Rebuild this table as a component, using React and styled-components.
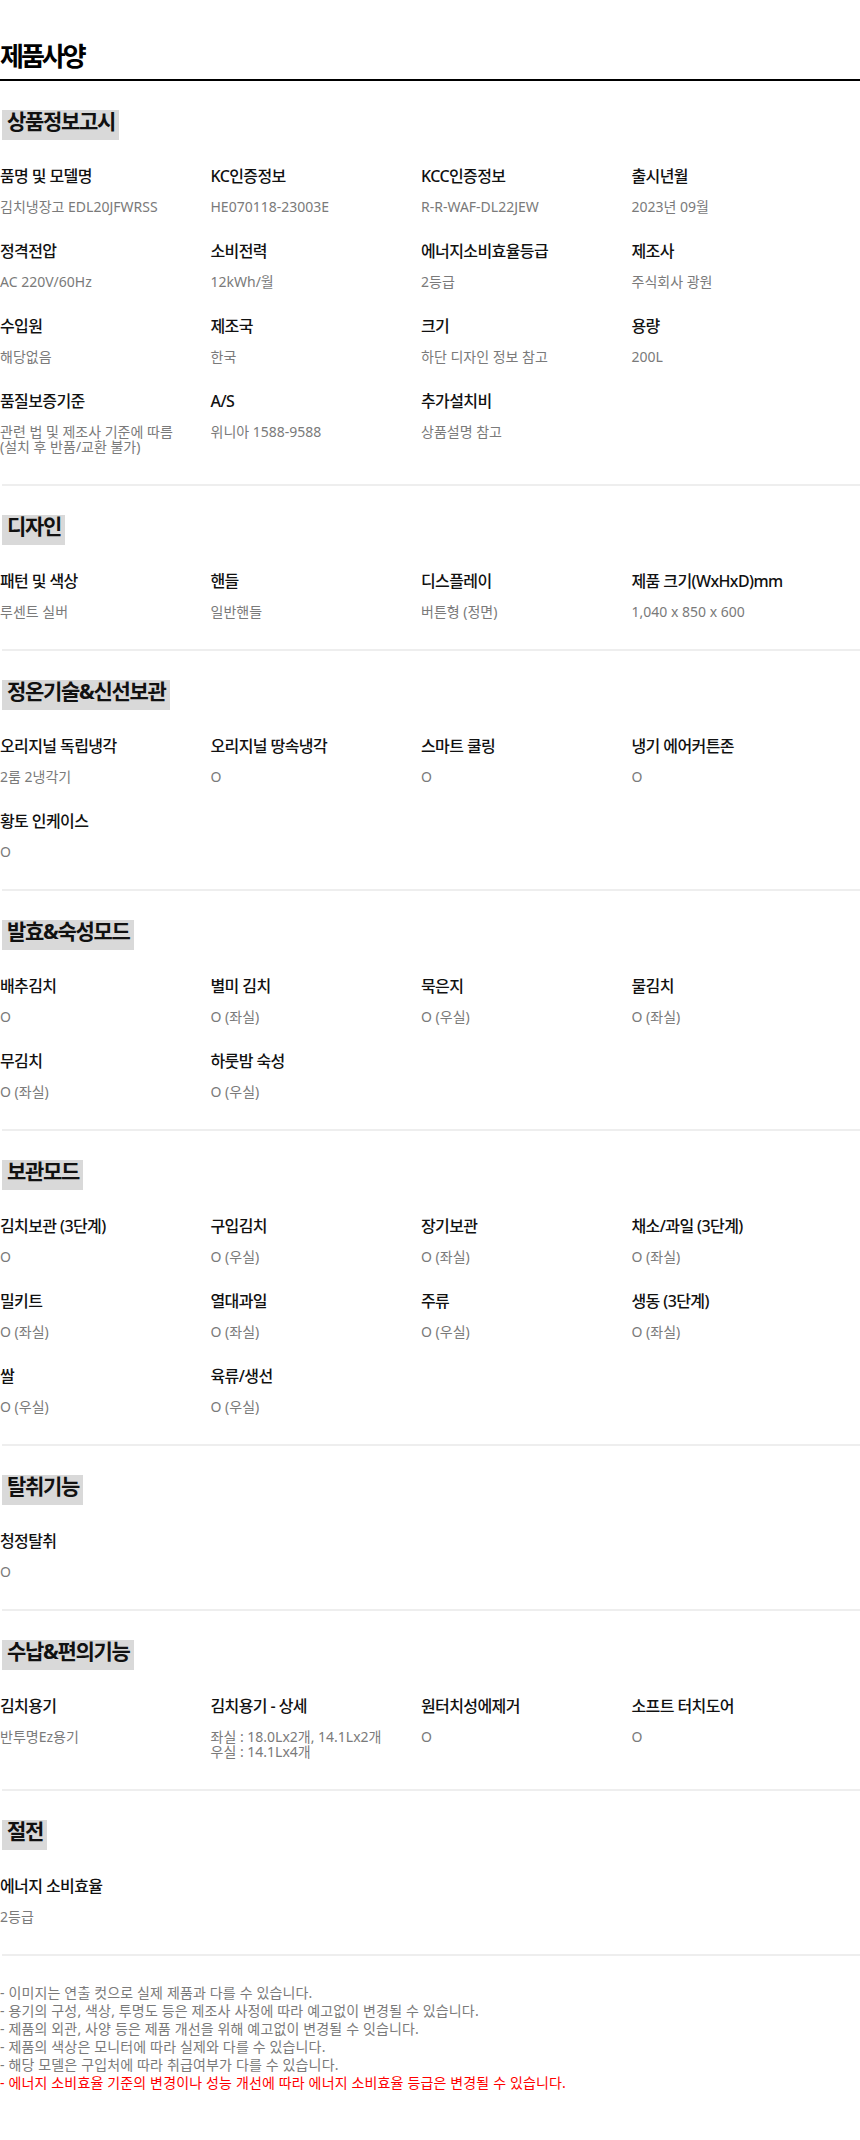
import React from 'react';
import styled, { createGlobalStyle } from 'styled-components';

const GlobalStyle = createGlobalStyle`
  body {
    margin: 0;
    background: #fff;
    font-family: "Noto Sans", "Noto Sans CJK KR", sans-serif;
  }
`;

const Page = styled.div`
  width: 860px;
`;

const Title = styled.h2`
  margin: 41px 0 0;
  padding: 0 0 8px;
  font-size: 26px;
  line-height: 30px;
  font-weight: 700;
  letter-spacing: -3px;
  color: #000;
  border-bottom: 2px solid #000;
`;

const Section = styled.section`
  margin-left: 2px;
  padding: 29px 0 30px;
  border-bottom: 2px solid #eee;
`;

const SectionName = styled.h3`
  display: inline-block;
  margin: 0;
  padding: 0 4px 7px 5px;
  height: 23px;
  line-height: 23px;
  background: #d9d9d9;
  font-size: 21px;
  font-weight: 700;
  letter-spacing: -1.3px;
  color: #111;
`;

const SpecGrid = styled.dl`
  display: grid;
  grid-template-columns: repeat(4, 210.5px);
  row-gap: 26px;
  margin: 25px 0 0 -2px;
`;

const Item = styled.div``;

const Label = styled.dt`
  font-size: 16px;
  line-height: 22px;
  letter-spacing: -0.6px;
  color: #111;
  font-weight: 500;
`;

const Value = styled.dd`
  margin: 12px 0 0;
  font-size: 14px;
  line-height: 15px;
  letter-spacing: 0;
  color: #7a7a7a;
  white-space: pre-line;
`;

const Notes = styled.div`
  padding-top: 28px;
`;

const Note = styled.p`
  margin: 0;
  font-size: 14px;
  line-height: 18px;
  letter-spacing: 0.15px;
  color: ${(p) => (p.$warn ? '#ff0000' : '#7a7a7a')};
`;

const sections = [
  {
    name: '상품정보고시',
    items: [
      ['품명 및 모델명', '김치냉장고 EDL20JFWRSS'],
      ['KC인증정보', 'HE070118-23003E'],
      ['KCC인증정보', 'R-R-WAF-DL22JEW'],
      ['출시년월', '2023년 09월'],
      ['정격전압', 'AC 220V/60Hz'],
      ['소비전력', '12kWh/월'],
      ['에너지소비효율등급', '2등급'],
      ['제조사', '주식회사 광원'],
      ['수입원', '해당없음'],
      ['제조국', '한국'],
      ['크기', '하단 디자인 정보 참고'],
      ['용량', '200L'],
      ['품질보증기준', '관련 법 및 제조사 기준에 따름\n(설치 후 반품/교환 불가)'],
      ['A/S', '위니아 1588-9588'],
      ['추가설치비', '상품설명 참고'],
    ],
  },
  {
    name: '디자인',
    items: [
      ['패턴 및 색상', '루센트 실버'],
      ['핸들', '일반핸들'],
      ['디스플레이', '버튼형 (정면)'],
      ['제품 크기(WxHxD)mm', '1,040 x 850 x 600'],
    ],
  },
  {
    name: '정온기술&신선보관',
    items: [
      ['오리지널 독립냉각', '2룸 2냉각기'],
      ['오리지널 땅속냉각', 'O'],
      ['스마트 쿨링', 'O'],
      ['냉기 에어커튼존', 'O'],
      ['황토 인케이스', 'O'],
    ],
  },
  {
    name: '발효&숙성모드',
    items: [
      ['배추김치', 'O'],
      ['별미 김치', 'O (좌실)'],
      ['묵은지', 'O (우실)'],
      ['물김치', 'O (좌실)'],
      ['무김치', 'O (좌실)'],
      ['하룻밤 숙성', 'O (우실)'],
    ],
  },
  {
    name: '보관모드',
    items: [
      ['김치보관 (3단계)', 'O'],
      ['구입김치', 'O (우실)'],
      ['장기보관', 'O (좌실)'],
      ['채소/과일 (3단계)', 'O (좌실)'],
      ['밀키트', 'O (좌실)'],
      ['열대과일', 'O (좌실)'],
      ['주류', 'O (우실)'],
      ['생동 (3단계)', 'O (좌실)'],
      ['쌀', 'O (우실)'],
      ['육류/생선', 'O (우실)'],
    ],
  },
  {
    name: '탈취기능',
    items: [['청정탈취', 'O']],
  },
  {
    name: '수납&편의기능',
    items: [
      ['김치용기', '반투명Ez용기'],
      ['김치용기 - 상세', '좌실 : 18.0Lx2개, 14.1Lx2개\n우실 : 14.1Lx4개'],
      ['원터치성에제거', 'O'],
      ['소프트 터치도어', 'O'],
    ],
  },
  {
    name: '절전',
    items: [['에너지 소비효율', '2등급']],
  },
];

const notes = [
  '- 이미지는 연출 컷으로 실제 제품과 다를 수 있습니다.',
  '- 용기의 구성, 색상, 투명도 등은 제조사 사정에 따라 예고없이 변경될 수 있습니다.',
  '- 제품의 외관, 사양 등은 제품 개선을 위해 예고없이 변경될 수 잇습니다.',
  '- 제품의 색상은 모니터에 따라 실제와 다를 수 있습니다.',
  '- 해당 모델은 구입처에 따라 취급여부가 다를 수 있습니다.',
];

function App() {
  return (
    <Page>
      <GlobalStyle />
      <Title>제품사양</Title>
      {sections.map((section) => (
        <Section key={section.name}>
          <SectionName>{section.name}</SectionName>
          <SpecGrid>
            {section.items.map(([label, value]) => (
              <Item key={label}>
                <Label>{label}</Label>
                <Value>{value}</Value>
              </Item>
            ))}
          </SpecGrid>
        </Section>
      ))}
      <Notes>
        {notes.map((n) => (
          <Note key={n}>{n}</Note>
        ))}
        <Note $warn>- 에너지 소비효율 기준의 변경이나 성능 개선에 따라 에너지 소비효율 등급은 변경될 수 있습니다.</Note>
      </Notes>
    </Page>
  );
}

export default App;
